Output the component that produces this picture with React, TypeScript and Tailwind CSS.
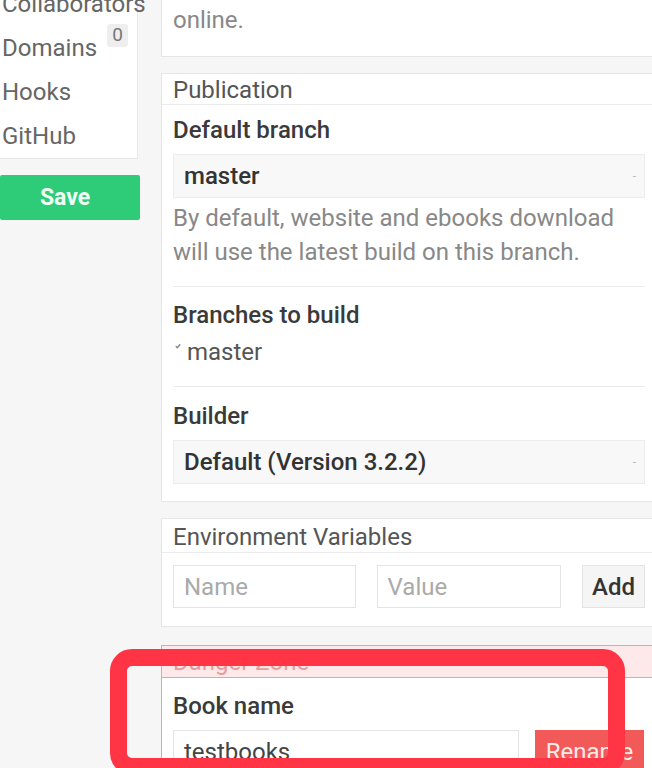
import React from "react";

const sideItems = ["Collaborators", "Domains", "Hooks", "GitHub"];

function SelectBox({ value }: { value: string }) {
  return (
    <div className="flex h-[44px] items-center justify-between border border-[#ececec] bg-[#f8f8f8] pl-[10px] pr-[8px]">
      <span className="font-medium text-[#333]">{value}</span>
      <span className="text-[12px] text-[#bbb]">-</span>
    </div>
  );
}

function Panel({
  title,
  children,
  className = "",
  headClass = "h-[31px] leading-[33px]",
}: {
  title: string;
  children: React.ReactNode;
  className?: string;
  headClass?: string;
}) {
  return (
    <div className={`border border-[#e6e6e6] bg-white ${className}`}>
      <div className={`overflow-hidden border-b border-[#ececec] px-[11px] text-[#555] ${headClass}`}>{title}</div>
      {children}
    </div>
  );
}

export default function App() {
  return (
    <div
      className="relative flex h-[768px] w-[652px] gap-[21px] overflow-hidden bg-[#f6f6f6] text-[24px] leading-[34px]"
      style={{ fontFamily: "Roboto, 'Noto Sans', sans-serif" }}
    >
      {/* sidebar */}
      <div className="flex w-[140px] shrink-0 flex-col">
        <div className="mt-[-18px] w-[138px] border-b border-r border-[#e8e8e8] bg-white">
          {sideItems.map((item) => (
            <div key={item} className="flex h-[44px] items-center whitespace-nowrap pl-[2px] text-[#666]">
              <span>{item}</span>
              {item === "Domains" && (
                <span className="relative -top-[13px] ml-[10px] flex h-[23px] w-[21px] items-center justify-center rounded-[3px] bg-[#eee] text-[19px] text-[#777]">
                  0
                </span>
              )}
            </div>
          ))}
        </div>
        <button className="mt-[16px] h-[45px] w-[140px] rounded-[2px] bg-[#2ecb78] pr-[10px] text-center text-[23px] font-bold text-[#effff5]">
          Save
        </button>
      </div>

      {/* main column */}
      <div className="flex w-[496px] shrink-0 flex-col">
        <div className="mt-[-44px] border border-[#e6e6e6] bg-white px-[11px] pb-[19px] pt-[12px] text-[#888]">
          <div className="whitespace-nowrap">Everyone can read and access this book</div>
          <div>online.</div>
        </div>

        <Panel title="Publication" className="mt-[16px]">
          <div className="px-[11px] pb-[17px] pt-[8px]">
            <div className="font-medium text-[#3a3a3a]">Default branch</div>
            <div className="mt-[7px]">
              <SelectBox value="master" />
            </div>
            <p className="mt-[3px] pr-[14px] text-[#888]">
              By default, website and ebooks download will use the latest build on this branch.
            </p>
            <div className="mt-[17px] border-t border-[#ececec] pt-[11px]">
              <div className="font-medium text-[#3a3a3a]">Branches to build</div>
              <div className="mt-[3px] flex items-center text-[#555]">
                <svg width="6" height="6" viewBox="0 0 6 6" className="-mt-[12px] ml-[2px] mr-[6px]">
                  <path d="M0.8 3.2 L2.3 4.7 L5.2 1.2" stroke="#888" strokeWidth="1.4" fill="none" />
                </svg>
                <span>master</span>
              </div>
            </div>
            <div className="mt-[17px] border-t border-[#ececec] pt-[12px]">
              <div className="font-medium text-[#3a3a3a]">Builder</div>
              <div className="mt-[7px]">
                <SelectBox value="Default (Version 3.2.2)" />
              </div>
            </div>
          </div>
        </Panel>

        <Panel title="Environment Variables" className="mt-[16px]" headClass="h-[34px] leading-[36px]">
          <div className="flex items-center gap-[21px] px-[11px] pb-[18px] pt-[12px]">
            <div className="flex h-[43px] w-[183px] items-center border border-[#e4e4e4] pl-[10px] text-[#aaa]">Name</div>
            <div className="flex h-[43px] w-[185px] items-center border border-[#e4e4e4] pl-[10px] text-[#aaa]">Value</div>
            <div className="flex h-[43px] w-[63px] items-center justify-center border border-[#e4e4e4] bg-[#f5f5f5] font-medium text-[#333]">
              Add
            </div>
          </div>
        </Panel>

        <div className="mt-[18px] border border-[#e0a5a5] bg-white">
          <div className="h-[32px] border-b border-[#e0a5a5] bg-[#fde9e9] px-[11px] leading-[32px] text-[#e99a9a]">
            Danger Zone
          </div>
          <div className="px-[11px] pt-[11px]">
            <div className="font-medium text-[#3a3a3a]">Book name</div>
            <div className="mt-[7px] flex gap-[16px]">
              <div className="flex h-[43px] w-[346px] items-center border border-[#e4e4e4] pl-[10px] text-[#444]">testbooks</div>
              <div className="flex h-[43px] w-[109px] items-center justify-center bg-[#f25a5a] text-[#ffe9e9]">Rename</div>
            </div>
          </div>
        </div>
      </div>

      {/* annotation overlay */}
      <div className="pointer-events-none absolute left-[110px] top-[649px] h-[126px] w-[515px] rounded-[22px] border-[17px] border-[#ff3445]" />
    </div>
  );
}
